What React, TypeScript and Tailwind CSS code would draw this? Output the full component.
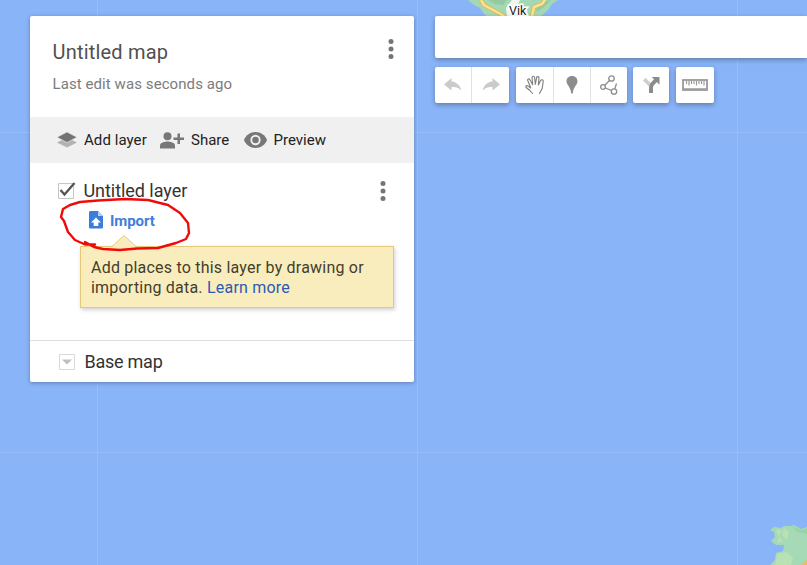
import type { ReactNode } from 'react';

function MapCanvas() {
  return (
    <svg className="absolute inset-0" width="807" height="565" viewBox="0 0 807 565">
      <path d="M97.500 0V565M417.500 0V565M737.500 0V565M0 132.500H807M0 452.500H807" stroke="#9abcf8" strokeWidth="1" />
      <path d="M468 0L474 5L480 8L486 16H541L548 10L552 4L558 0Z" fill="#a4d8b4" />
      <path d="M488 0L495 4L503 5L507 0ZM536 6L543 2L551 0L545 6L537 12Z" fill="#93c9a3" />
      <path d="M512 0H520L518 4L527 9L528 16H507L506 8Z" fill="#f3f6ee" />
      <path d="M481 0L484 5L495 11L504 16M545 0L542 4L534 7L532 16" fill="none" stroke="#d8b65c" strokeWidth="4" />
      <path d="M481 0L484 5L495 11L504 16M545 0L542 4L534 7L532 16" fill="none" stroke="#ffe38b" strokeWidth="2.500" />
      <path d="M770 530L774 527L781 528L784 526H790L794 525L801 529L807 527V565H770L775 560L776 553L783 551L784 545L776 545L771 541L775 537L774 532Z" fill="#a6d9b5" />
      <path d="M776 529L782 531L779 536L783 541L777 543L779 537ZM777 554L786 552L793 558L791 565H775Z" fill="#b9e2b4" />
      <path d="M784 528L789 532L787 540L782 535Z" fill="#b9e2b4" />
      <path d="M791 526L801 530L807 528V534L798 532Z" fill="#98d3a0" />
      <path d="M802 565L807 560V565Z" fill="#f6ba4d" />
      <text x="509" y="15" fontSize="12.500" fill="#222" stroke="#fff" strokeWidth="3" paintOrder="stroke" className="font-['Roboto',sans-serif]">Vik</text>
    </svg>
  );
}

function Dots() {
  return (
    <svg width="6" height="20" viewBox="0 0 6 20" fill="#757575">
      <circle cx="3" cy="2.500" r="2.500" />
      <circle cx="3" cy="10" r="2.500" />
      <circle cx="3" cy="17.500" r="2.500" />
    </svg>
  );
}

function LayersIcon() {
  return (
    <svg width="20" height="16" viewBox="0 0 20 16">
      <path d="M10 5.500L20 10.500L10 15.500L0 10.500Z" fill="#b3b3b3" />
      <path d="M10 0L20 5.200L10 10.500L0 5.200Z" fill="#737373" stroke="#f0f0f0" strokeWidth=".6" />
    </svg>
  );
}

function ShareIcon() {
  return (
    <svg width="24" height="17" viewBox="0 0 24 17" fill="#777">
      <circle cx="7.500" cy="4.200" r="4" />
      <path d="M0 16.500V13.500C0 10.500 5 9.500 7.500 9.500S15 10.500 15 13.500V16.500Z" />
      <path d="M17.500 1.500H20V5.500H24V8H20V12H17.500V8H13.500V5.500H17.500Z" />
    </svg>
  );
}

function EyeIcon() {
  return (
    <svg width="23" height="16" viewBox="0 0 23 16">
      <path d="M11.500 0C6.300 0 1.800 3.200 0 8C1.800 12.800 6.300 16 11.500 16S21.200 12.800 23 8C21.200 3.200 16.700 0 11.500 0Z" fill="#777" />
      <circle cx="11.500" cy="8" r="4.200" fill="#777" stroke="#f0f0f0" strokeWidth="1.900" />
    </svg>
  );
}

function ImportIcon() {
  return (
    <svg width="14" height="18" viewBox="0 0 14 18">
      <path d="M1.500 0H9L14 5V16C14 17 13.300 17.500 12.500 17.500H1.500C.6 17.500 0 17 0 16V1.500C0 .6 .6 0 1.500 0Z" fill="#3b7ddd" />
      <path d="M9 0V5H14Z" fill="#b7d2f6" />
      <path d="M7 6.500L12 11.500H9.300V15H4.700V11.500H2Z" fill="#fff" />
    </svg>
  );
}

function UndoIcon() {
  return (
    <svg width="18" height="14" viewBox="0 0 18 14" fill="#cacaca">
      <path d="M7.500 0V3.500C13 4 16.500 8 17.300 12.500C14.500 9.500 11.500 8.600 7.500 9V12.500L0 6.500Z" />
    </svg>
  );
}

function HandIcon() {
  return (
    <svg width="20" height="20" viewBox="0 0 20 20" fill="none" stroke="#7d7d7d" strokeWidth="1.100" strokeLinejoin="round" strokeLinecap="round">
      <path d="M7.500 18.500L5 15.500L1.200 12.500C.2 11.300 1.500 10.200 2.800 10.900L5.800 13L2.700 5.500C2.300 3.800 4.200 3.300 4.900 4.700L7.700 9.800L7 2.500C7.200 .8 9.300 .8 9.600 2.500L10.300 9.300L11.600 2.600C12.100 1 14.100 1.400 14 3L13.300 10L15.700 5.400C16.500 4.100 18.600 4.900 18.200 6.400L17.200 13.500L14.500 18.500" />
    </svg>
  );
}

function PinIcon() {
  return (
    <svg width="12" height="18" viewBox="0 0 12 18" fill="#8d8d8d">
      <path d="M6 0C2.500 0 .5 2.300 .5 5.300C.5 9 4.600 10.500 5.200 17.500H6.800C7.400 10.500 11.500 9 11.500 5.300C11.500 2.300 9.500 0 6 0Z" />
    </svg>
  );
}

function LineIcon() {
  return (
    <svg width="18" height="20" viewBox="0 0 18 20" fill="#fff" stroke="#8c8c8c" strokeWidth="1.300">
      <path d="M11.500 3.500L3 12L14 16.500L16.500 8.500" fill="none" />
      <circle cx="11.500" cy="3.500" r="2.700" />
      <circle cx="3" cy="12" r="2.300" />
      <circle cx="14" cy="16.500" r="2.700" />
    </svg>
  );
}

function DirectionsIcon() {
  return (
    <svg width="17" height="18" viewBox="0 0 17 18">
      <path d="M1.200 3.200L7.500 9.500" stroke="#cfcfcf" strokeWidth="3.800" />
      <path d="M8 17V11.500Q8 9 10 7.200L13 4.200" fill="none" stroke="#8b8b8b" strokeWidth="4" />
      <path d="M8.700 1H16.500V8.800Z" fill="#8b8b8b" />
    </svg>
  );
}

function RulerIcon() {
  return (
    <svg width="26" height="12" viewBox="0 0 26 12" fill="none" stroke="#9a9a9a">
      <rect x="1" y="1" width="24" height="10" strokeWidth="1.800" />
      <path d="M4.500 2V5M7 2V6.500M9.500 2V5M12 2V5M14.500 2V6.500M17 2V5M19.500 2V5M22 2V6.500" strokeWidth="1.200" />
      <path d="M1 10H25" strokeWidth="1.500" />
    </svg>
  );
}

function ToolGroup({ children }: { children: ReactNode }) {
  return (
    <div className="flex h-9 divide-x divide-[#e1e1e1] rounded-[2px] bg-white shadow-[0_2px_5px_rgba(0,0,0,0.3)]">
      {children}
    </div>
  );
}

function Tool({ width, label, children }: { width: string; label: string; children: ReactNode }) {
  return <button aria-label={label} className={`flex h-9 items-center justify-center ${width}`}>{children}</button>;
}

function Panel() {
  return (
    <section className="h-[366px] w-96 shrink-0 rounded-[2px] bg-white shadow-[0_1px_4px_rgba(0,0,0,0.3)]">
      <header className="flex h-[101px] justify-between pt-[22px] pr-5 pl-[22.5px]">
        <div>
          <h1 className="text-[20px] leading-7 tracking-[0.2px] text-[#505050]">Untitled map</h1>
          <p className="mt-2 text-[15px] leading-5 tracking-[0.08px] text-[#7c7c7c]">Last edit was seconds ago</p>
        </div>
        <div className="pt-[1px]"><Dots /></div>
      </header>
      <nav className="flex h-[46px] items-center bg-[#f0f0f0] pl-[27px] text-[15px] text-[#222]">
        <button className="flex w-[103px] items-center gap-[7px] whitespace-nowrap tracking-[0.07px]"><LayersIcon />Add layer</button>
        <button className="flex w-[84px] items-center gap-[7px] whitespace-nowrap"><ShareIcon />Share</button>
        <button className="flex items-center gap-[6.5px] whitespace-nowrap"><EyeIcon />Preview</button>
      </nav>
      <div className="h-[177px] pt-4">
        <div className="flex h-6 items-center pr-7 pl-7">
          <svg width="18" height="18" viewBox="0 0 18 18">
            <path d="M.5 1.500H15.500V16.500H.5Z" fill="#fff" stroke="#c6c6c6" />
            <path d="M2.500 8L6.500 12.500L16.500 1" fill="none" stroke="#555" strokeWidth="2.300" />
          </svg>
          <h2 className="ml-[7.5px] grow text-[18px] leading-6 tracking-[-0.05px] text-[#333]">Untitled layer</h2>
          <Dots />
        </div>
        <button className="mt-[7px] ml-[59px] flex h-5 items-center gap-[7px] text-[15px] font-bold tracking-[-0.1px] text-[#3f80d8]">
          <ImportIcon /><span className="pt-[2px]">Import</span>
        </button>
        <div className="relative mt-4 ml-[50px] h-[62px] w-[314px] border border-[#e5c878] bg-[#f9edbe] pt-[11px] pl-[10px] text-[16px] leading-5 tracking-[0.21px] text-[#443e2c] shadow-[1px_2px_4px_rgba(0,0,0,0.18)]">
          <svg className="absolute -top-[12px] left-[31px]" width="24" height="13" viewBox="0 0 24 13">
            <path d="M0 12L12 .5L24 12V13H0Z" fill="#f9edbe" />
            <path d="M0 11.500L12 .5L24 11.500" fill="none" stroke="#e5c878" />
          </svg>
          <p className="whitespace-nowrap">Add places to this layer by drawing or<br />importing data. <a className="text-[#2b5ab5]">Learn more</a></p>
        </div>
      </div>
      <footer className="flex h-[42px] items-center border-t border-[#dedede] pl-[29px] text-[18px] tracking-[-0.25px] text-[#333]">
        <svg className="mr-[9.5px]" width="16" height="16" viewBox="0 0 16 16">
          <path d="M.5 .5H15.500V15.500H.5Z" fill="#fff" stroke="#d9d9d9" />
          <path d="M3 5.500H13L8 10.500Z" fill="#bfbfbf" />
        </svg>
        Base map
      </footer>
    </section>
  );
}

export default function App() {
  return (
    <main className="relative h-[565px] w-[807px] overflow-hidden bg-[#8ab4f8] font-['Roboto',sans-serif]">
      <MapCanvas />
      <div className="relative flex gap-[21px] pt-4 pl-[30px]">
        <Panel />
        <div className="grow">
          <div className="h-[42px] rounded-l-[2px] bg-white shadow-[0_2px_5px_rgba(0,0,0,0.3)]" />
          <div className="mt-[9px] flex">
            <ToolGroup>
              <Tool width="w-[37px]" label="Undo"><UndoIcon /></Tool>
              <Tool width="w-[37px]" label="Redo"><span className="-scale-x-100"><UndoIcon /></span></Tool>
            </ToolGroup>
            <div className="mr-1.5 ml-[7px]">
              <ToolGroup>
                <Tool width="w-[38px]" label="Pan"><HandIcon /></Tool>
                <Tool width="w-[37px]" label="Add marker"><PinIcon /></Tool>
                <Tool width="w-9" label="Draw a line"><LineIcon /></Tool>
              </ToolGroup>
            </div>
            <ToolGroup><Tool width="w-9" label="Add directions"><DirectionsIcon /></Tool></ToolGroup>
            <div className="ml-[7px]">
              <ToolGroup><Tool width="w-[38px]" label="Measure"><RulerIcon /></Tool></ToolGroup>
            </div>
          </div>
        </div>
      </div>
      <svg className="absolute top-[190px] left-[50px]" width="150" height="65" viewBox="0 0 150 65" fill="none" stroke="#f00b0b" strokeWidth="2.400" strokeLinecap="round" strokeLinejoin="round">
        <path d="M45 54.500H35L25 50L18 42L14 31L11 27L13 19L20 15L30 12L48 10.500L75 9L98 10L118 15L130 23L138 33L139 43L136 49L126 53L108 58L87 58.500L70 60L53 59L44 57L35 52" />
      </svg>
    </main>
  );
}
